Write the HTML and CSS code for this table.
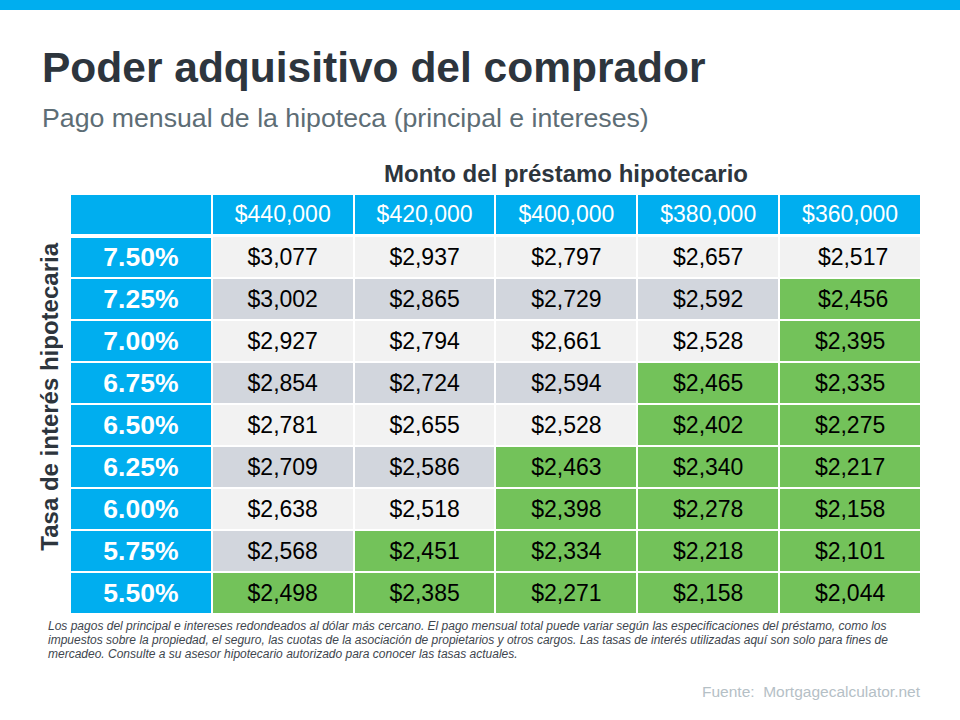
FILE: index.html
```html
<!DOCTYPE html>
<html lang="es">
<head>
<meta charset="utf-8">
<title>Poder adquisitivo del comprador</title>
<link rel="stylesheet" href="styles.css">
</head>
<body>
<div class="topbar"></div>
<header class="head">
  <h1 class="title">Poder adquisitivo del comprador</h1>
  <p class="subtitle">Pago mensual de la hipoteca (principal e intereses)</p>
</header>
<div class="caption-row"><div class="caption">Monto del préstamo hipotecario</div></div>
<main class="main">
  <div class="ylabel"><span>Tasa de interés hipotecaria</span></div>
  <div class="grid">
    <div class="hd"></div>
    <div class="hd">$440,000</div>
    <div class="hd">$420,000</div>
    <div class="hd">$400,000</div>
    <div class="hd">$380,000</div>
    <div class="hd">$360,000</div>

    <div class="rate">7.50%</div>
    <div class="c l">$3,077</div><div class="c l">$2,937</div><div class="c l">$2,797</div><div class="c l">$2,657</div><div class="c l sh">$2,517</div>
    <div class="rate">7.25%</div>
    <div class="c d">$3,002</div><div class="c d">$2,865</div><div class="c d">$2,729</div><div class="c d">$2,592</div><div class="c g sh">$2,456</div>
    <div class="rate">7.00%</div>
    <div class="c l">$2,927</div><div class="c l">$2,794</div><div class="c l">$2,661</div><div class="c l">$2,528</div><div class="c g">$2,395</div>
    <div class="rate">6.75%</div>
    <div class="c d">$2,854</div><div class="c d">$2,724</div><div class="c d">$2,594</div><div class="c g">$2,465</div><div class="c g">$2,335</div>
    <div class="rate">6.50%</div>
    <div class="c l">$2,781</div><div class="c l">$2,655</div><div class="c l">$2,528</div><div class="c g">$2,402</div><div class="c g">$2,275</div>
    <div class="rate">6.25%</div>
    <div class="c d">$2,709</div><div class="c d">$2,586</div><div class="c g">$2,463</div><div class="c g">$2,340</div><div class="c g">$2,217</div>
    <div class="rate">6.00%</div>
    <div class="c l">$2,638</div><div class="c l">$2,518</div><div class="c g">$2,398</div><div class="c g">$2,278</div><div class="c g">$2,158</div>
    <div class="rate">5.75%</div>
    <div class="c d">$2,568</div><div class="c g">$2,451</div><div class="c g">$2,334</div><div class="c g">$2,218</div><div class="c g">$2,101</div>
    <div class="rate">5.50%</div>
    <div class="c g">$2,498</div><div class="c g">$2,385</div><div class="c g">$2,271</div><div class="c g">$2,158</div><div class="c g">$2,044</div>
  </div>
</main>
<p class="note">Los pagos del principal e intereses redondeados al dólar más cercano. El pago mensual total puede variar según las especificaciones del préstamo, como los<br>impuestos sobre la propiedad, el seguro, las cuotas de la asociación de propietarios y otros cargos. Las tasas de interés utilizadas aquí son solo para fines de<br>mercadeo. Consulte a su asesor hipotecario autorizado para conocer las tasas actuales.</p>
<div class="source">Fuente:&nbsp; Mortgagecalculator.net</div>
</body>
</html>
```

FILE: styles.css
```css
* { box-sizing: border-box; }
html, body { margin: 0; padding: 0; background: #ffffff; }
body {
  width: 960px;
  height: 720px;
  overflow: hidden;
  font-family: "Liberation Sans", Arial, sans-serif;
}
.topbar { height: 10px; background: #00aeef; }
.head { padding-left: 42px; }
.title {
  margin: 34px 0 0 0;
  font-size: 42.5px;
  line-height: 48px;
  font-weight: bold;
  color: #2d353d;
}
.subtitle {
  margin: 11px 0 0 0;
  font-size: 26.7px;
  line-height: 30px;
  color: #5d6d75;
}
.caption-row {
  display: flex;
  margin: 27px 0 0 212px;
  width: 708px;
  justify-content: center;
}
.caption {
  font-size: 24px;
  line-height: 28px;
  font-weight: bold;
  color: #2d353d;
}
.main {
  display: flex;
  margin-top: 7px;
}
.ylabel {
  width: 71px;
  display: flex;
  justify-content: flex-end;
  align-items: center;
  padding-right: 7px;
  padding-bottom: 14px;
}
.ylabel span {
  writing-mode: vertical-rl;
  transform: rotate(180deg);
  font-size: 24px;
  font-weight: bold;
  color: #2d353d;
  white-space: nowrap;
}
.grid {
  width: 849px;
  display: grid;
  grid-template-columns: repeat(6, 1fr);
  grid-template-rows: 40px repeat(9, 40px);
  column-gap: 2px;
  row-gap: 2px;
  background: #ffffff;
}
.grid > div {
  display: flex;
  align-items: center;
  justify-content: center;
}
.hd {
  background: #00aeef;
  color: #ffffff;
  font-size: 23px;
  margin-bottom: 1px;
}
.rate {
  background: #00aeef;
  color: #ffffff;
  font-size: 26.5px;
  font-weight: bold;
}
.grid > .hd ~ .rate:nth-child(7) { margin-top: 1px; }
.c { font-size: 23px; color: #000000; }
.l { background: #f2f2f2; }
.d { background: #d2d6dd; }
.g { background: #73c25a; }
.sh { padding-left: 6px; }
.note {
  margin: 6px 0 0 48px;
  width: 900px;
  font-size: 12px;
  line-height: 14px;
  font-style: italic;
  color: #3e464e;
}
.source {
  margin: 22px 40px 0 0;
  text-align: right;
  font-size: 15.5px;
  color: #b5c0c6;
}
```
